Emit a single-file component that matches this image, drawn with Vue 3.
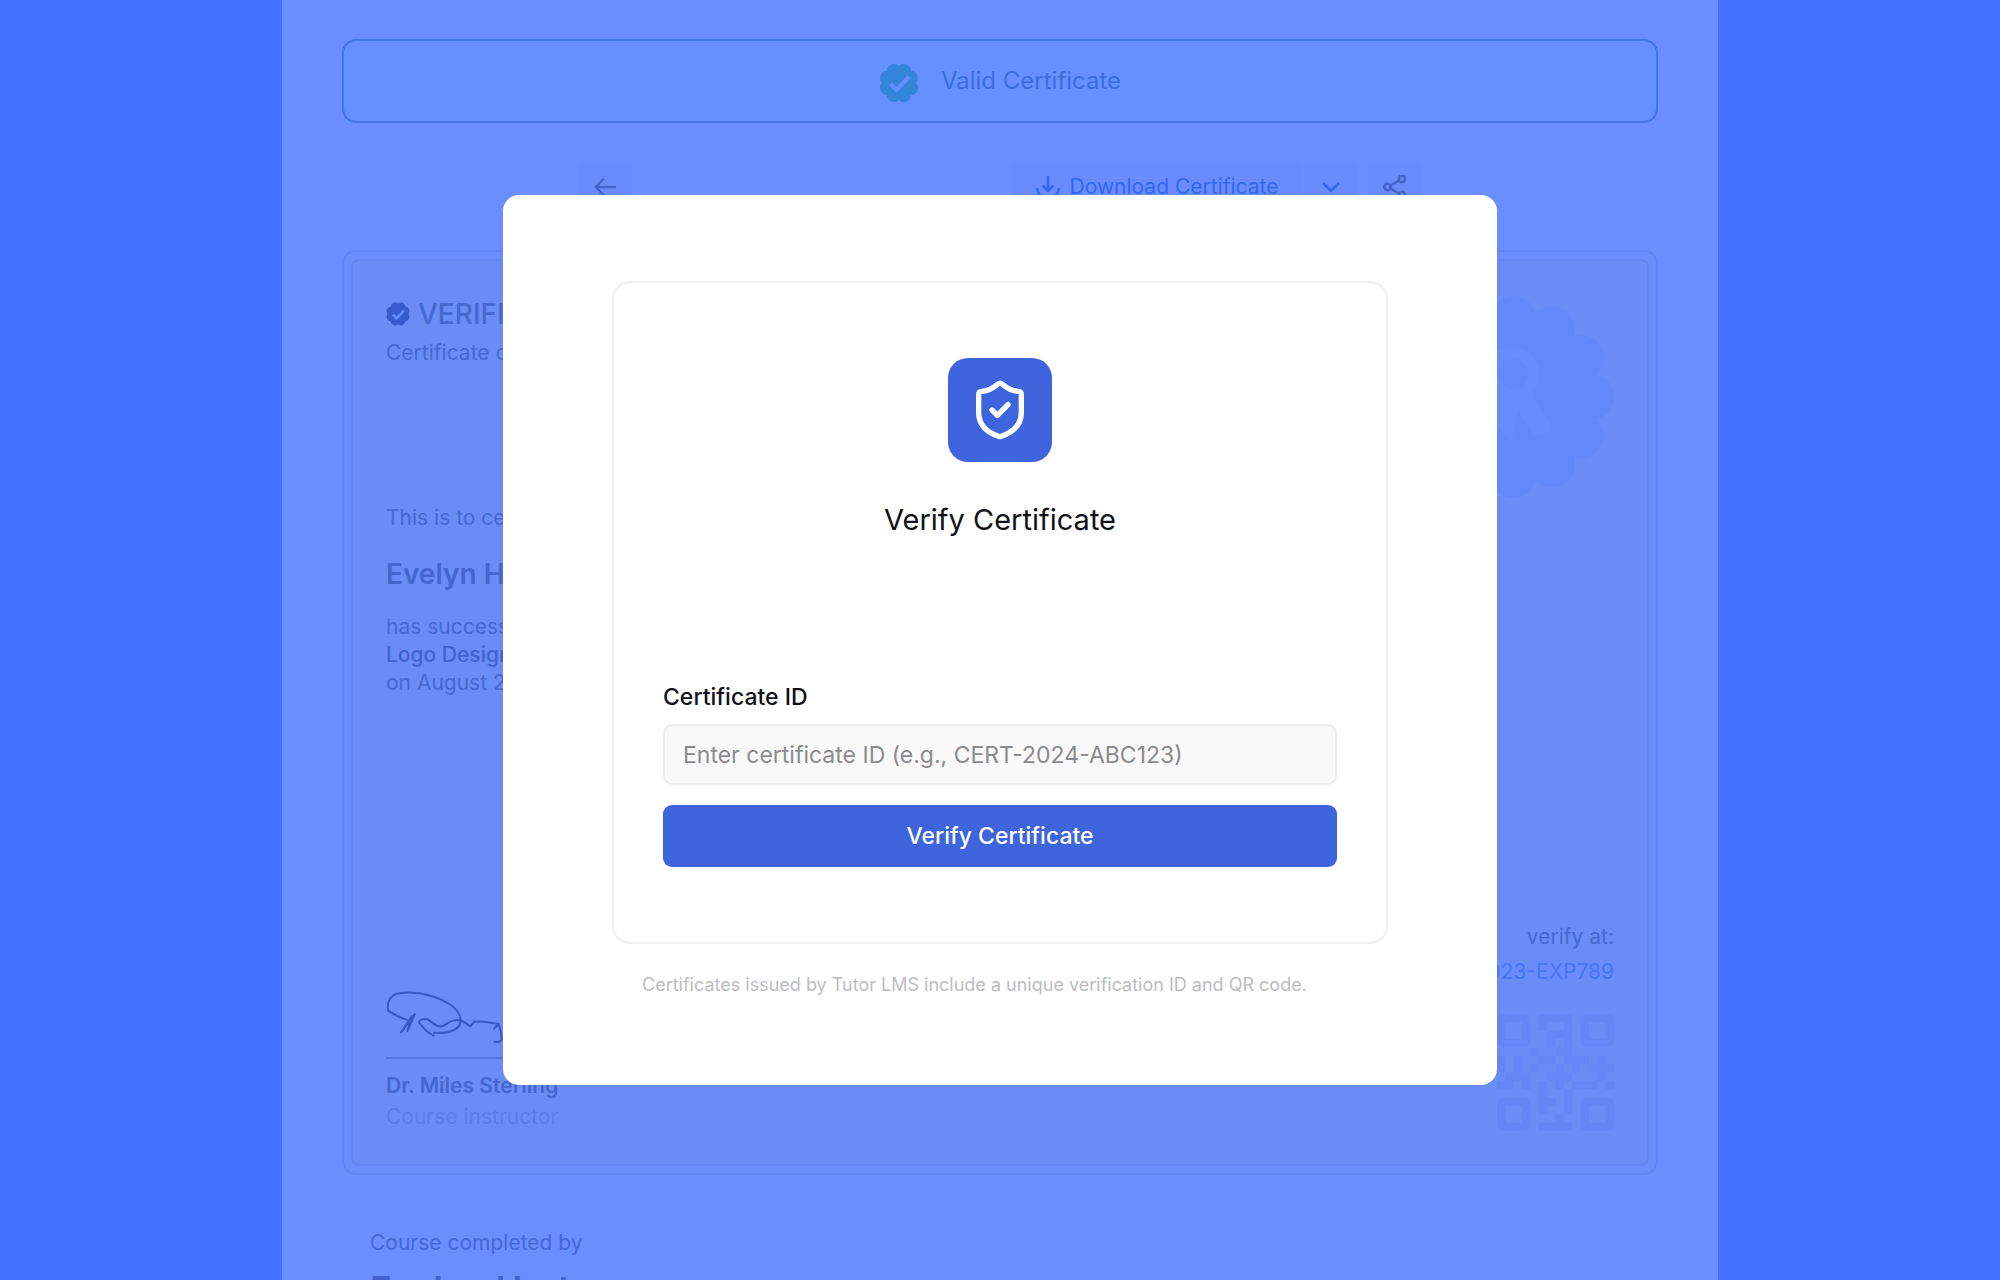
<template>
  <div class="page">
    <main class="sheet">
      <div class="valid-banner">
        <svg class="valid-icon" viewBox="0 0 40 40" aria-hidden="true">
          <circle cx="20" cy="20" r="16" />
          <circle v-for="(p, i) in badgeLobes" :key="i" :cx="p.x" :cy="p.y" r="7.5" />
          <path class="tick" d="M11.5 21 17.5 27 30 14" />
        </svg>
        <span>Valid Certificate</span>
      </div>

      <div class="toolbar">
        <button class="tool" aria-label="Back">
          <svg class="tool-icon" viewBox="0 0 24 24"><path d="M22 12H2M10 3.5 1.8 12l8.2 8.5" /></svg>
        </button>
        <div class="tool-group">
          <button class="tool download">
            <svg class="tool-icon" viewBox="0 0 24 24">
              <path d="M12 1v15M6.5 10.5 12 16l5.5-5.5M1 13c0 5 4 9.500 11 9.500S23 18 23 13" />
            </svg>
            Download Certificate
          </button>
          <button class="tool link" aria-label="More formats">
            <svg class="tool-icon" viewBox="0 0 24 24"><path d="m4 8 8 8 8-8" /></svg>
          </button>
          <button class="tool share" aria-label="Share">
            <svg class="tool-icon" viewBox="0 0 24 24">
              <circle cx="19" cy="4" r="3.2" />
              <circle cx="4.5" cy="12" r="3.2" />
              <circle cx="19" cy="20" r="3.2" />
              <path d="m7.5 10.5 8.5-5M7.5 13.5l8.5 5" />
            </svg>
          </button>
        </div>
      </div>

      <section class="certificate">
        <div class="certificate-inner">
          <div class="cert-left">
            <h2 class="cert-title">
              <svg class="title-icon" viewBox="0 0 40 40" aria-hidden="true">
                <circle cx="20" cy="20" r="16" />
                <circle v-for="(p, i) in badgeLobes" :key="i" :cx="p.x" :cy="p.y" r="7.5" />
                <path class="tick" d="M11.5 21 17.5 27 30 14" />
              </svg>
              VERIFIED
            </h2>
            <p class="cert-sub">Certificate of completion</p>
            <p class="cert-intro">This is to certify that</p>
            <h3 class="cert-name">Evelyn Hart</h3>
            <p>has successfully completed</p>
            <p class="medium">Logo Design</p>
            <p>on August 2023</p>
            <svg class="signature" viewBox="165 570 360 165" aria-hidden="true">
              <path
                d="M232 661C212 655 190 645 171 631C168 600 178 585 205 580C260 570 320 590 355 612C385 632 392 655 387 672C375 700 335 700 306 698M253 641L210 697L243 648L229 694L250 645M310 708L288 695L264 668C264 658 282 655 290 658C305 668 318 684 335 678C352 670 365 655 392 662L418 679L430 665C450 663 475 667 503 672L488 687M503 672C510 690 512 705 512 719C508 728 498 727 488 725"
              />
            </svg>
            <div class="sign-line"></div>
            <p class="sign-name">Dr. Miles Sterling</p>
            <p class="sign-role">Course instructor</p>
          </div>
          <div class="cert-right">
            <svg class="seal" viewBox="0 0 202 202" aria-hidden="true">
              <circle cx="101" cy="101" r="86" />
              <circle v-for="(p, i) in sealLobes" :key="i" :cx="p.x" :cy="p.y" r="23" />
              <path class="ribbon" d="M84 100 72 136l16-3 12 14 6-34 16 28 20-6-24-40z" />
              <circle class="medal" cx="101" cy="78" r="21" />
            </svg>
            <div class="verify-at">
              <p>verify at:</p>
              <a href="#" @click.prevent>CERT-2023-EXP789</a>
              <svg class="qr" viewBox="0 0 14 14" aria-hidden="true">
                <rect x="0.5" y="0.5" width="3" height="3" rx="0.3" />
                <rect x="10.5" y="0.5" width="3" height="3" rx="0.3" />
                <rect x="0.5" y="10.5" width="3" height="3" rx="0.3" />
                <rect x="10.5" y="10.5" width="3" height="3" rx="0.3" />
                <path :d="qrPath" />
              </svg>
            </div>
          </div>
        </div>
      </section>

      <div class="completed">
        <p>Course completed by</p>
        <h2>Evelyn Hart</h2>
      </div>
    </main>

    <div class="overlay">
      <div class="modal" role="dialog" aria-labelledby="verify-title">
        <form class="verify-card" @submit.prevent="handleVerify">
          <div class="shield">
            <svg viewBox="0 0 24 24" aria-hidden="true">
              <path
                d="M20 13c0 5-3.5 7.5-7.66 8.95a1 1 0 0 1-.67-.01C7.5 20.5 4 18 4 13V6a1 1 0 0 1 1-1c2 0 4.5-1.2 6.24-2.72a1.17 1.17 0 0 1 1.52 0C14.51 3.81 17 5 19 5a1 1 0 0 1 1 1z"
              />
              <path d="m9 12 2 2 4-4" />
            </svg>
          </div>
          <h1 id="verify-title">Verify Certificate</h1>
          <label for="cert-id">Certificate ID</label>
          <input
            id="cert-id"
            v-model="certId"
            type="text"
            placeholder="Enter certificate ID (e.g., CERT-2024-ABC123)"
            autocomplete="off"
          />
          <button type="submit" class="verify-btn">Verify Certificate</button>
        </form>
        <p class="note">Certificates issued by Tutor LMS include a unique verification ID and QR code.</p>
      </div>
    </div>
  </div>
</template>

<script setup>
import { ref } from "vue";

const emit = defineEmits(["verify"]);

const certId = ref("");

const handleVerify = () => {
  if (!certId.value.trim()) return;
  emit("verify", certId.value.trim());
};

// Scalloped edge: small circles placed around a centre
const lobes = (count, center, radius, start) =>
  Array.from({ length: count }, (_, i) => {
    const a = start + (i * 2 * Math.PI) / count;
    return { x: center + radius * Math.cos(a), y: center + radius * Math.sin(a) };
  });

const badgeLobes = lobes(8, 20, 12.5, Math.PI / 8);
const sealLobes = lobes(12, 101, 78, 0);

// QR modules, the three corners are drawn as outlined squares
const qrRows = [
  ".....####.....",
  ".....#..#.....",
  "......###.....",
  "......#.#.....",
  "....#..##.....",
  "#.#..##.###.#.",
  "#.#.#..#.#.###",
  ".###..###...#.",
  "##.#.#.#.###.#",
  ".....#..#.....",
  ".....##.#.....",
  ".....#..#.....",
  ".......#......",
  ".....####.....",
];
const qrPath = qrRows
  .map((row, y) => [...row].map((c, x) => (c === "#" ? `M${x} ${y}h1v1h-1z` : "")).join(""))
  .join("");
</script>

<style>
body {
  margin: 0;
  background: #4270ff;
}
</style>

<style scoped>
* {
  box-sizing: border-box;
}

.page {
  position: relative;
  height: 100vh;
  overflow: hidden;
  font-family: Inter, "Liberation Sans", sans-serif;
  font-size: 21px;
  line-height: 28px;
  color: #4668d1;
  background: #4270ff;
}

h1,
h2,
h3,
p {
  margin: 0;
}

button,
input {
  font: inherit;
}

.sheet {
  max-width: 1436px;
  min-height: 100%;
  margin: 0 auto;
  padding: 39px 60px 0;
  background: #6a8eff;
}

/* 顶部状态条 */
.valid-banner {
  display: flex;
  align-items: center;
  justify-content: center;
  gap: 22px;
  height: 84px;
  border: 2px solid #4274e4;
  border-radius: 14px;
  background: #6690fd;
  color: #3c6edb;
  font-size: 24px;
}

.valid-icon {
  width: 40px;
  height: 40px;
  margin-top: 4px;
  fill: #3485dc;
}

.tick {
  fill: none;
  stroke: #6690fd;
  stroke-width: 4;
}

/* 工具栏 */
.toolbar {
  display: flex;
  justify-content: space-between;
  max-width: 842px;
  margin: 38px auto 0;
}

.tool-group {
  display: flex;
}

.tool {
  display: flex;
  align-items: center;
  justify-content: center;
  gap: 10px;
  width: 53px;
  height: 52px;
  padding: 0;
  border: 0;
  border-radius: 6px;
  background: #688cfc;
  color: #4464c8;
}

.tool.download {
  width: 290px;
  color: #3466f6;
}

.tool.link {
  margin-left: 2px;
  color: #3466f6;
}

.tool.share {
  margin-left: 11px;
}

.tool-icon {
  width: 24px;
  height: 24px;
  fill: none;
  stroke: currentColor;
  stroke-width: 2.5;
}

/* 证书 */
.certificate {
  margin-top: 37px;
  padding: 7px;
  border: 2px solid #6284ef;
  border-radius: 14px;
  background: #698dfb;
}

.certificate-inner {
  display: flex;
  justify-content: space-between;
  padding: 35px 33px 33px;
  border: 2px solid #6486f2;
  border-radius: 8px;
  background: #698cf7;
}

.cert-title {
  display: flex;
  align-items: center;
  gap: 8px;
  font-size: 28px;
  font-weight: 500;
  line-height: 36px;
}

.title-icon {
  width: 24px;
  height: 24px;
  fill: #385bcb;
}

.cert-sub {
  margin-top: 7px;
}

.cert-intro {
  margin-top: 137px;
}

.cert-name {
  margin: 24px 0 21px;
  font-size: 28px;
  font-weight: 600;
  line-height: 36px;
  color: #4466ce;
}

.medium {
  font-weight: 500;
  color: #4163cb;
}

.signature {
  display: block;
  width: 120px;
  height: 55px;
  margin-top: 293px;
  fill: none;
  stroke: #3658c4;
  stroke-width: 6;
  stroke-linejoin: round;
}

.sign-line {
  width: 240px;
  margin: 12px 0 13px;
  border-top: 2px solid #5576df;
}

.sign-name {
  font-weight: 600;
  color: #4466d0;
}

.sign-role {
  margin-top: 3px;
  color: #5c7de8;
}

.cert-right {
  display: flex;
  flex-direction: column;
  align-items: flex-end;
  justify-content: space-between;
}

.seal {
  width: 202px;
  height: 202px;
  fill: #6389f8;
}

.ribbon {
  fill: #678bf8;
}

.medal {
  fill: #6389f8;
  stroke: #678bf8;
  stroke-width: 12;
}

.verify-at {
  display: flex;
  flex-direction: column;
  align-items: flex-end;
  gap: 7px;
}

.verify-at a {
  color: #4774fb;
  text-decoration: none;
}

.qr {
  width: 117px;
  height: 117px;
  margin-top: 21px;
  fill: #6487f5;
}

.qr rect {
  fill: none;
  stroke: #6487f5;
  stroke-width: 1;
}

.completed {
  padding: 54px 28px 0;
}

.completed h2 {
  margin-top: 8px;
  font-size: 36px;
  font-weight: 600;
  line-height: 48px;
  color: #4062cc;
}

/* 弹窗 */
.overlay {
  position: absolute;
  inset: 0;
  display: flex;
  align-items: center;
  justify-content: center;
}

.modal {
  width: 100%;
  max-width: 994px;
  padding: 86px 109px;
  border-radius: 16px;
  background: #fff;
}

.verify-card {
  display: flex;
  flex-direction: column;
  padding: 75px 49px;
  border: 2px solid #efefef;
  border-radius: 18px;
}

.shield {
  display: flex;
  align-items: center;
  justify-content: center;
  align-self: center;
  width: 104px;
  height: 104px;
  border-radius: 20px;
  background: #3e64de;
}

.shield svg {
  width: 64px;
  height: 64px;
  fill: none;
  stroke: #fff;
  stroke-width: 2;
  stroke-linecap: round;
  stroke-linejoin: round;
}

.verify-card h1 {
  margin: 38px 0 143px;
  color: #0f1117;
  font-size: 29px;
  font-weight: 400;
  line-height: 40px;
  text-align: center;
}

.verify-card label {
  color: #0f1117;
  font-size: 23px;
  font-weight: 500;
}

.verify-card input {
  height: 61px;
  margin-top: 13px;
  padding: 0 18px;
  border: 2px solid #ececec;
  border-radius: 9px;
  background: #f9f9f9;
  color: #0f1117;
  font-size: 23px;
  outline: none;
}

.verify-card input::placeholder {
  color: #8b8b8d;
  opacity: 1;
}

.verify-btn {
  height: 62px;
  margin-top: 20px;
  border: 0;
  border-radius: 9px;
  background: #3e64de;
  color: #fff;
  font-size: 23px;
  font-weight: 500;
  cursor: pointer;
}

.note {
  margin: 27px 0 0 30px;
  color: #bcbdbf;
  font-size: 18px;
}
</style>
